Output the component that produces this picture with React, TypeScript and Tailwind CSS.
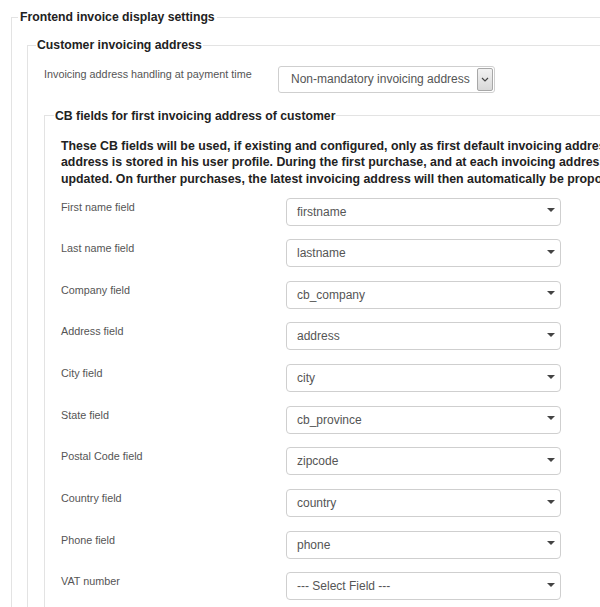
import React from "react";

const fields = [
  { label: "First name field", value: "firstname" },
  { label: "Last name field", value: "lastname" },
  { label: "Company field", value: "cb_company" },
  { label: "Address field", value: "address" },
  { label: "City field", value: "city" },
  { label: "State field", value: "cb_province" },
  { label: "Postal Code field", value: "zipcode" },
  { label: "Country field", value: "country" },
  { label: "Phone field", value: "phone" },
  { label: "VAT number", value: "--- Select Field ---" },
];

function Caret() {
  return (
    <svg width="8" height="4" viewBox="0 0 8 4" className="mb-[3px]">
      <path d="M0 0 L8 0 L4 4 Z" fill="#444" />
    </svg>
  );
}

function FieldSelect({ value }: { value: string }) {
  return (
    <div className="flex h-[28px] w-[275px] items-center justify-between rounded-[4px] border border-[#cfcfcf] bg-white pl-[10px] pr-[5px] text-[12px] text-[#555]">
      <span>{value}</span>
      <Caret />
    </div>
  );
}

function HandlingSelect() {
  return (
    <div className="flex h-[27px] w-[217px] items-center justify-between rounded-[3px] border border-[#cfcfcf] bg-white pl-[12px] pr-[1px] text-[12px] text-[#555]">
      <span>Non-mandatory invoicing address</span>
      <div className="flex h-[23px] w-[16px] items-center justify-center rounded-[2px] border border-[#a8a8a8] bg-gradient-to-b from-[#f2f2f2] to-[#d8d8d8]">
        <svg width="8" height="5" viewBox="0 0 8 5">
          <path d="M1 1 L4 4 L7 1" fill="none" stroke="#444" strokeWidth="1.2" />
        </svg>
      </div>
    </div>
  );
}

export default function App() {
  return (
    <div
      className="h-[607px] w-full overflow-hidden bg-white"
      style={{ fontFamily: '"Liberation Sans", Arial, sans-serif' }}
    >
      <div className="w-[1000px] pl-[11px] pt-[10px]">
        <fieldset className="border border-[#e3e3e3] pl-[6px] pb-4">
          <legend className="px-[2px] text-[12.25px] leading-[14px] font-bold text-[#222]">
            Frontend invoice display settings
          </legend>

          <fieldset className="ml-[9px] mt-[14px] border border-[#e3e3e3] pl-[8px] pb-4">
            <legend className="px-[1px] text-[12.25px] leading-[14px] font-bold text-[#222]">
              Customer invoicing address
            </legend>

            <div className="mt-[13.5px] flex pl-[8px]">
              <div className="w-[234px] pt-[2px] text-[10.8px] leading-[13px] text-[#555]">
                Invoicing address handling at payment time
              </div>
              <HandlingSelect />
            </div>

            <fieldset className="ml-[8px] mt-[16px] border border-[#e3e3e3] pl-[9px] pb-4">
              <legend className="px-[1px] text-[12.25px] leading-[14px] font-bold text-[#222]">
                CB fields for first invoicing address of customer
              </legend>

              <p className="mt-[15px] whitespace-nowrap pl-[7px] text-[12.35px] leading-[16.5px] font-bold text-[#222]">
                These CB fields will be used, if existing and configured, only as first default invoicing address for the user, if no invoicing
                <br />
                address is stored in his user profile. During the first purchase, and at each invoicing address change, the CB fields will be
                <br />
                updated. On further purchases, the latest invoicing address will then automatically be proposed.
              </p>

              <div className="mt-[10.5px] flex flex-col gap-y-[13.67px] pl-[7px]">
                {fields.map((f) => (
                  <div key={f.label} className="flex">
                    <div className="w-[225px] pt-[3px] text-[10.8px] leading-[13px] text-[#555]">{f.label}</div>
                    <FieldSelect value={f.value} />
                  </div>
                ))}
              </div>
            </fieldset>
          </fieldset>
        </fieldset>
      </div>
    </div>
  );
}
